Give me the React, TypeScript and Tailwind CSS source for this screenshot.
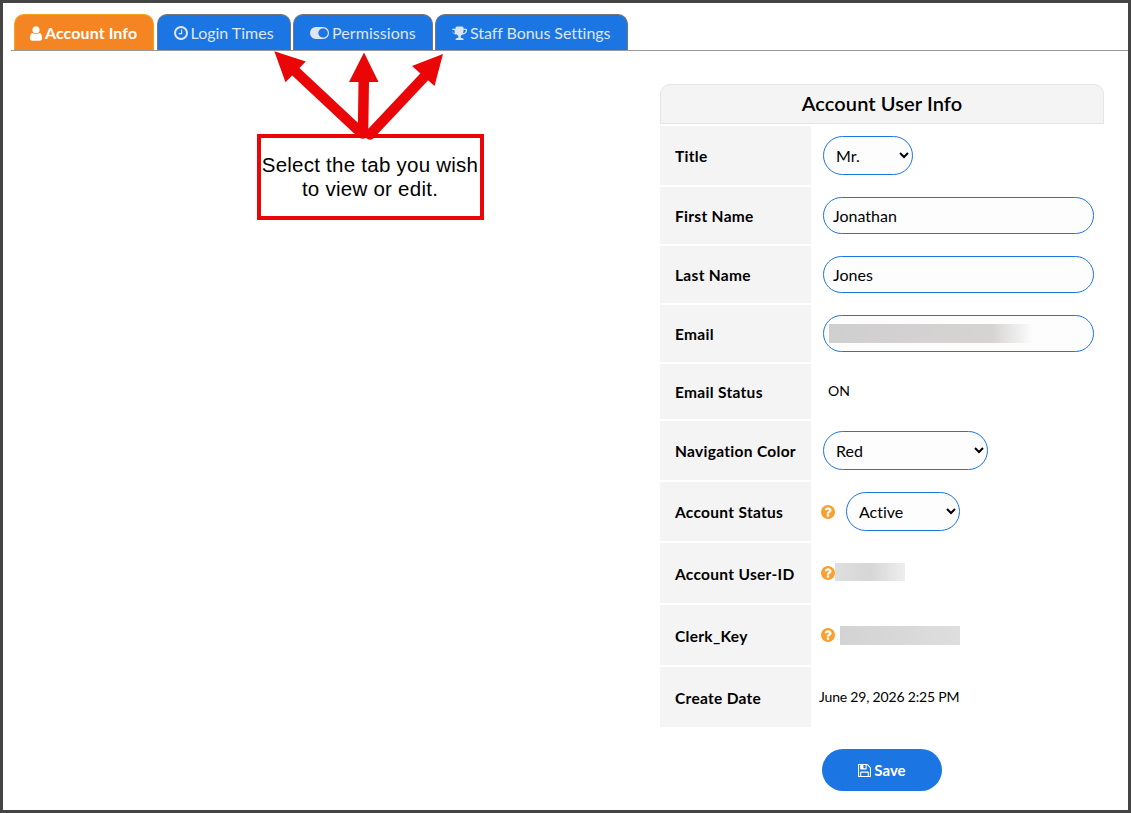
import type { ReactNode } from "react";

const paths = {
  user: "M1280 1399q0 109-62.5 187t-150.5 78h-854q-88 0-150.5-78t-62.5-187q0-85 8.5-160.5t31.5-152 58.5-131 94-89 134.5-34.5q131 128 313 128t313-128q76 0 134.5 34.5t94 89 58.5 131 31.5 152 8.5 160.5zm-256-887q0 159-112.5 271.5t-271.5 112.5-271.5-112.5-112.5-271.5 112.5-271.5 271.5-112.5 271.5 112.5 112.5 271.5z",
  clock: "M1024 544v448q0 14-9 23t-23 9h-320q-14 0-23-9t-9-23v-64q0-14 9-23t23-9h224v-352q0-14 9-23t23-9h64q14 0 23 9t9 23zm416 352q0-148-73-273t-198-198-273-73-273 73-198 198-73 273 73 273 198 198 273 73 273-73 198-198 73-273zm224 0q0 209-103 385.5t-279.5 279.5-385.5 103-385.5-103-279.5-279.5-103-385.5 103-385.5 279.5-279.5 385.5-103 385.5 103 279.5 279.5 103 385.5z",
  toggle: "M0 896q0-130 51-248.5t136.5-204 204-136.5 248.5-51h768q130 0 248.5 51t204 136.5 136.5 204 51 248.5-51 248.5-136.5 204-204 136.5-248.5 51h-768q-130 0-248.5-51t-204-136.5-136.5-204-51-248.5zm1408 512q104 0 198.5-40.5t163.5-109.5 109.5-163.5 40.5-198.5-40.5-198.5-109.5-163.5-163.5-109.5-198.5-40.5-198.5 40.5-163.5 109.5-109.5 163.5-40.5 198.5 40.5 198.5 109.5 163.5 163.5 109.5 198.5 40.5z",
  trophy: "M458 930q-74-162-74-370h-256v96q0 78 94.5 162t235.5 112zm1206-274v-96h-256q0 208-74 370 141-28 235.5-112t94.5-162zm128-128v128q0 71-41.5 143t-112 130-173 97.5-215.5 44.5q-42 54-95 95-38 34-52.5 72.5t-14.5 89.5q0 54 30.5 91t97.5 37q75 0 133.5 45.5t58.5 114.5v64q0 14-9 23t-23 9h-832q-14 0-23-9t-9-23v-64q0-69 58.5-114.5t133.5-45.5q67 0 97.5-37t30.5-91q0-51-14.5-89.5t-52.5-72.5q-53-41-95-95-113-5-215.5-44.5t-173-97.5-112-130-41.5-143v-128q0-40 28-68t68-28h288v-96q0-66 47-113t113-47h576q66 0 113 47t47 113v96h288q40 0 68 28t28 68z",
  floppy: "M512 1536h768v-384h-768v384zm896 0h128v-896q0-14-10-38.5t-20-34.5l-281-281q-10-10-34-20t-39-10v416q0 40-28 68t-68 28h-576q-40 0-68-28t-28-68v-416h-128v1280h128v-416q0-40 28-68t68-28h832q40 0 68 28t28 68v416zm-384-928v-320q0-13-9.5-22.5t-22.5-9.5h-192q-13 0-22.5 9.5t-9.5 22.5v320q0 13 9.5 22.5t22.5 9.5h192q13 0 22.5-9.5t9.5-22.5zm640 32v928q0 40-28 68t-68 28h-1344q-40 0-68-28t-28-68v-1344q0-40 28-68t68-28h928q40 0 88 20t76 48l280 280q28 28 48 76t20 88z",
  help: "M1024 1376v-192q0-14-9-23t-23-9h-192q-14 0-23 9t-9 23v192q0 14 9 23t23 9h192q14 0 23-9t9-23zm256-672q0-88-55.5-163t-138.5-116-170-41q-243 0-371 213-15 24 8 42l132 100q7 6 19 6 16 0 25-12 53-68 86-92 34-24 86-24 48 0 85.5 26t37.5 59q0 38-20 61t-68 45q-63 28-115.5 86.5t-52.5 125.5v36q0 14 9 23t23 9h192q14 0 23-9t9-23q0-19 21.5-49.5t54.5-49.5q32-18 49-28.5t46-35 44.5-48 28-60.5 12.5-81zm384 192q0 209-103 385.5t-279.5 279.5-385.5 103-385.5-103-279.5-279.5-103-385.5 103-385.5 279.5-279.5 385.5-103 385.5 103 279.5 279.5 103 385.5z",
};

function Icon({ d, box, className }: { d: string; box: string; className: string }) {
  return (
    <svg viewBox={box} fill="currentColor" className={`shrink-0 ${className}`}>
      <path d={d} />
    </svg>
  );
}

function Help() {
  return <Icon d={paths.help} box="128 128 1536 1536" className="size-3.5 text-[#fb9f31]" />;
}

function Tab({ className, children }: { className: string; children: ReactNode }) {
  return (
    <button
      className={`flex h-9 items-center whitespace-nowrap rounded-t-[10px] border border-b-0 pt-px text-base ${className}`}
    >
      {children}
    </button>
  );
}

const blueTab = "border-[#777] bg-[#1b76e3] text-[#dfe5ee]";

function Row({ label, height, children }: { label: string; height: string; children: ReactNode }) {
  return (
    <div className={`flex ${height}`}>
      <div className="flex w-[151px] shrink-0 items-center bg-[#f4f4f4] pt-px pl-[15px] text-[15.5px] leading-[22px] font-bold tracking-[0.3px]">
        {label}
      </div>
      <div className="flex flex-1 items-center pl-3">{children}</div>
    </div>
  );
}

function Field({ value }: { value: string }) {
  return (
    <input
      defaultValue={value}
      className="h-[37px] w-[271px] rounded-[19px] border border-[#1b76e3] bg-[#fdfdfd] pb-px pl-[9px] text-base"
    />
  );
}

function Select({ value, className }: { value: string; className: string }) {
  return (
    <select
      className={`h-[39px] rounded-[20px] border border-[#1b76e3] bg-[#fdfdfd] pl-2 text-base ${className}`}
    >
      <option>{value}</option>
    </select>
  );
}

function Callout() {
  return (
    <>
      <div className="absolute top-[134px] left-[257px] flex h-[86px] w-[227px] items-center justify-center border-4 border-[#ea0606] bg-white pr-px text-center font-['Liberation_Sans',Arial,sans-serif] text-[20.5px] leading-6 tracking-[0.25px] whitespace-nowrap">
        <p>
          Select the tab you wish
          <br />
          to view or edit.
        </p>
      </div>
      <svg
        viewBox="0 0 180 92"
        className="absolute top-[50px] left-[270px] h-[92px] w-[180px]"
        fill="#ea0606"
        stroke="#ea0606"
      >
        <path stroke="none" d="M4.300 1.200 35.800 11.500 15.500 32.300ZM94 2.500 108.500 32H79ZM173 4 164.500 36 142 16Z" />
        <path
          fill="none"
          strokeWidth="10.500"
          strokeLinecap="round"
          d="M25 21 87.500 79.500M93.800 29 93 83.500M156 25 100 84.500"
        />
      </svg>
    </>
  );
}

export default function App() {
  return (
    <div className="relative h-[813px] w-[1131px] overflow-hidden border-[3px] border-[#444] bg-white font-[Lato,sans-serif] text-black [font-variant-ligatures:none]">
      <nav className="ml-2 flex h-12 items-end border-b border-[#999] pl-[3px]">
        <Tab className="mr-[3px] w-[140px] gap-[3px] border-[#f5a31f] bg-[#f58423] pl-[15px] font-bold tracking-[0.08px] text-white">
          <Icon d={paths.user} box="0 128 1280 1536" className="h-[15px] w-[12px]" />
          Account Info
        </Tab>
        <Tab className={`mr-0.5 w-[134px] gap-[3px] pl-[15.5px] ${blueTab}`}>
          <Icon d={paths.clock} box="128 128 1536 1536" className="size-[14px]" />
          Login Times
        </Tab>
        <Tab className={`mr-0.5 w-[140px] gap-[3px] pl-4 tracking-[0.07px] ${blueTab}`}>
          <Icon d={paths.toggle} box="0 256 2048 1280" className="h-[12px] w-[19px]" />
          Permissions
        </Tab>
        <Tab className={`w-[193px] gap-[3px] pl-[15px] tracking-[-0.06px] ${blueTab}`}>
          <Icon d={paths.trophy} box="0 128 1792 1536" className="h-[14px] w-4" />
          Staff Bonus Settings
        </Tab>
      </nav>

      <form className="mt-[33px] ml-[657px] flex w-[444px] flex-col gap-0.5">
        <h1 className="flex h-10 items-center justify-center rounded-t-[10px] border border-[#e5e5e5] bg-[#f4f4f4] pb-[3px] text-xl font-semibold tracking-[0.1px]">
          Account User Info
        </h1>
        <Row label="Title" height="h-[59px]">
          <Select value="Mr." className="w-[90px]" />
        </Row>
        <Row label="First Name" height="h-[57px]">
          <Field value="Jonathan" />
        </Row>
        <Row label="Last Name" height="h-[57px]">
          <Field value="Jones" />
        </Row>
        <Row label="Email" height="h-[57px]">
          <div className="flex h-[37px] w-[271px] items-center rounded-[19px] border border-[#1b76e3] bg-[#fdfdfd] pl-[5px]">
            <div className="h-[19px] w-[204px] bg-linear-to-r from-[#d0cfcf] via-[#d6d4d3] via-80% to-[#fdfdfd]" />
          </div>
        </Row>
        <Row label="Email Status" height="h-[55px]">
          <span className="pb-0.5 pl-[5px] text-sm">ON</span>
        </Row>
        <Row label="Navigation Color" height="h-[59px]">
          <Select value="Red" className="w-[165px]" />
        </Row>
        <Row label="Account Status" height="h-[59px]">
          <div className="-ml-0.5 flex items-center gap-[11px]">
            <Help />
            <Select value="Active" className="w-[114px]" />
          </div>
        </Row>
        <Row label="Account User-ID" height="h-[60px]">
          <div className="-ml-0.5 flex items-center">
            <Help />
            <div className="mb-0.5 h-[18px] w-[70px] bg-linear-to-r from-[#dfdfdf] via-[#d6d6d6] to-[#eeeeee]" />
          </div>
        </Row>
        <Row label="Clerk_Key" height="h-[60px]">
          <div className="-ml-0.5 flex items-center gap-[5px]">
            <Help />
            <div className="h-[19px] w-[120px] bg-linear-to-r from-[#d3d3d3] via-[#d8d8d8] to-[#dedede]" />
          </div>
        </Row>
        <Row label="Create Date" height="h-[60px]">
          <span className="-ml-1 text-sm tracking-[-0.19px]">June 29, 2026 2:25 PM</span>
        </Row>
        <button
          type="button"
          className="mt-5 ml-[162px] flex h-[42px] w-[120px] items-center justify-center gap-[3px] rounded-[21px] bg-[#1b76e3] text-[15px] font-bold text-white"
        >
          <Icon d={paths.floppy} box="128 128 1536 1536" className="size-[13px]" />
          Save
        </button>
      </form>

      <div className="absolute -top-[3px] -left-[3px]">
        <Callout />
      </div>
    </div>
  );
}
